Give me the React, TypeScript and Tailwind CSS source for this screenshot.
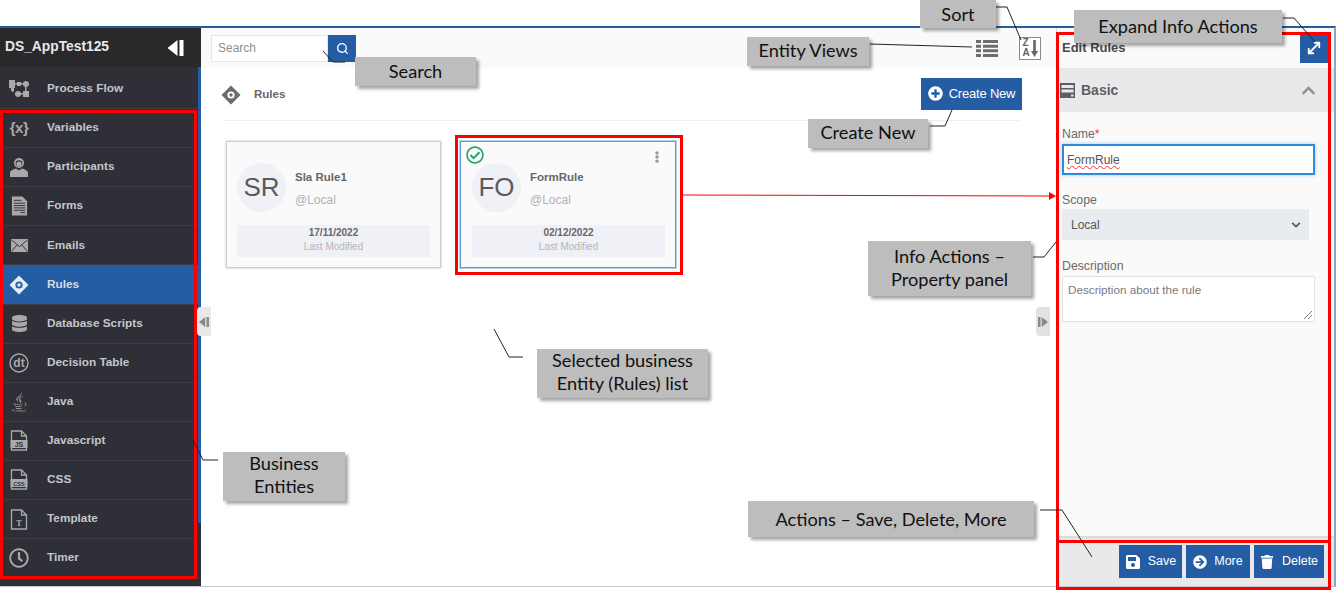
import React from "react";
import {
  FaDatabase, FaJava, FaRegClock, FaPlusCircle, FaTrash, FaSave, FaChevronUp,
  FaRegCheckCircle, FaEllipsisV, FaChevronDown, FaArrowCircleRight,
} from "react-icons/fa";
import { MoveDiagonal, Search as SearchIcon } from "lucide-react";

const C = "#a9a9ab";

const Diamond = ({ color = C, inner = "#2f2f37", size = 20 }: { color?: string; inner?: string; size?: number }) => (
  <svg width={size} height={size} viewBox="0 0 20 20">
    <path d="M10 0.5 19.5 10 10 19.5 0.5 10Z" fill={color} />
    <circle cx="10" cy="10" r="3.6" fill={inner} />
    <circle cx="10" cy="10" r="1.7" fill={color} />
  </svg>
);

const FlowIcon = () => (
  <svg width="20" height="20" viewBox="0 0 20 20" fill={C}>
    <rect x="0" y="1" width="6" height="8" />
    <rect x="8" y="3" width="4" height="4" />
    <circle cx="17" cy="5" r="3" />
    <rect x="5" y="4" width="12" height="1.5" />
    <rect x="3" y="8" width="1.5" height="5" />
    <rect x="16" y="7" width="1.5" height="8" />
    <rect x="2" y="9" width="3" height="3" />
    <circle cx="9" cy="15" r="3" />
    <rect x="14" y="12" width="6" height="6" />
    <rect x="10" y="14" width="5" height="1.5" />
  </svg>
);

const UserIcon = () => (
  <svg width="20" height="21" viewBox="0 0 20 21" fill={C}>
    <circle cx="10" cy="6" r="5" />
    <circle cx="10" cy="6.6" r="3.3" fill="#2f2f37" />
    <circle cx="10" cy="7.2" r="2.6" fill={C} />
    <path d="M1 20v-4c0-2.5 4-4 6-4.500l3 2 3-2c2 .5 6 2 6 4.500v4Z" />
  </svg>
);

const FormIcon = () => (
  <svg width="17" height="20" viewBox="0 0 18 20">
    <path d="M1 0h11l5 5v15H1Z" fill={C} />
    <path d="M3 4h8M3 7h12M3 9.500h12M3 12h12M3 14.500h12M10 17h5" stroke="#2f2f37" strokeWidth="1" />
  </svg>
);

const MailIcon = () => (
  <svg width="17" height="13" viewBox="0 0 17 13">
    <rect x="0" y="0" width="17" height="13" fill={C} />
    <path d="M0.500 1 8.500 7.500 16.500 1M0.500 12.500 6 6M16.500 12.500 11 6" fill="none" stroke="#2f2f37" strokeWidth="0.900" />
  </svg>
);

const FileLabel = ({ text, outline }: { text: string; outline?: boolean }) => (
  <svg width="18" height="21" viewBox="0 0 18 21">
    <path d="M1.500 20V1h10l5 5v14Z" fill="none" stroke={C} strokeWidth="1.300" />
    <path d="M11.500 1v5h5" fill="none" stroke={C} strokeWidth="1.300" />
    {outline ? (
      <text x="9" y="17" textAnchor="middle" fontSize="9" fontFamily="'Liberation Serif',serif" fontWeight="700" fill={C}>{text}</text>
    ) : (
      <>
        <rect x="0.500" y="10" width="17" height="8" fill={C} />
        <text x="9" y="16.500" textAnchor="middle" fontSize={text.length > 2 ? 5.500 : 7} fontFamily="'Liberation Sans',sans-serif" fontWeight="700" fill="#2f2f37">{text}</text>
      </>
    )}
  </svg>
);

const DtIcon = () => (
  <svg width="20" height="20" viewBox="0 0 20 20">
    <circle cx="10" cy="10" r="9" fill="none" stroke={C} strokeWidth="1.400" />
    <text x="10" y="14" textAnchor="middle" fontSize="12" fontWeight="700" fontFamily="'Liberation Sans',sans-serif" fill={C}>dt</text>
  </svg>
);

const Toggle = ({ color, w, h, flip }: { color: string; w: number; h: number; flip?: boolean }) => (
  <svg width={w} height={h} viewBox="0 0 16 16" className={flip ? "rotate-180" : ""}>
    <path d="M10 0V16L0 8Z M12 0H16V16H12Z" fill={color} />
  </svg>
);

const ListIcon = () => (
  <svg width="22" height="17" viewBox="0 0 22 17" fill="#6e6e6e">
    <path d="M0 0h5v3H0ZM7 0h15v3H7ZM0 4.670h5v3H0ZM7 4.670h15v3H7ZM0 9.330h5v3H0ZM7 9.330h15v3H7ZM0 14h5v3H0ZM7 14h15v3H7Z" />
  </svg>
);

const items: { label: string; icon: React.ReactNode; active?: boolean }[] = [
  { label: "Process Flow", icon: <FlowIcon /> },
  { label: "Variables", icon: <span className="text-[15px] font-bold text-[#a9a9ab] tracking-[-0.5px]">{"{x}"}</span> },
  { label: "Participants", icon: <UserIcon /> },
  { label: "Forms", icon: <FormIcon /> },
  { label: "Emails", icon: <MailIcon /> },
  { label: "Rules", icon: <Diamond color="#e4ecf5" inner="#245da3" />, active: true },
  { label: "Database Scripts", icon: <FaDatabase size={17} color={C} /> },
  { label: "Decision Table", icon: <DtIcon /> },
  { label: "Java", icon: <FaJava size={20} color={C} /> },
  { label: "Javascript", icon: <FileLabel text="JS" /> },
  { label: "CSS", icon: <FileLabel text="CSS" /> },
  { label: "Template", icon: <FileLabel text="T" outline /> },
  { label: "Timer", icon: <FaRegClock size={20} color={C} /> },
];

const Sidebar = () => (
  <aside className="w-[201px] flex flex-col bg-[#2f2f37] shrink-0">
    <div className="h-[39px] shrink-0 bg-[#29292c] flex items-center justify-between pl-[5px] pr-[17px]">
      <span className="text-[13.800px] font-bold text-[#e8e8e8]">DS_AppTest125</span>
      <Toggle color="#ffffff" w={17} h={16} />
    </div>
    <div className="flex-1 flex flex-col pt-[3px] border-r-[3px] border-[#245da3]">
      {items.map((it) => (
        <div
          key={it.label}
          className={`h-[39.100px] shrink-0 flex items-center border-b border-[#3d3d44] ${it.active ? "bg-[#245da3]" : ""}`}
        >
          <span className="w-[47px] pr-[9px] flex justify-center">{it.icon}</span>
          <span className={`text-[11.800px] font-bold ${it.active ? "text-[#d5dce6]" : "text-[#c3c6cc]"}`}>{it.label}</span>
        </div>
      ))}
    </div>
  </aside>
);

const Card = ({ initials, name, date, selected }: { initials: string; name: string; date: string; selected?: boolean }) => (
  <div className={`relative h-[127px] bg-[#fafafa] pr-[10px] pt-[21px] border ${selected ? "w-[216px] pl-[11px] border-[#5a9bd0] shadow-[0_0_0_1px_#b9d4ea]" : "w-[215px] pl-[10px] border-[#cfcfcf] shadow-[0_0_2px_#bbb]"}`}>
    {selected && (
      <>
        <FaRegCheckCircle size={18} color="#27a567" className="absolute left-[5px] top-[4px]" />
        <FaEllipsisV size={12} color="#9a9a9a" className="absolute right-[12px] top-[9px]" />
      </>
    )}
    <div className="flex">
      <div className="w-[49px] h-[49px] rounded-full bg-[#f0f1f6] flex items-center justify-center text-[26px] text-[#5b5b5e]">{initials}</div>
      <div className="ml-[9px] pt-[7px]">
        <div className="text-[11.500px] font-bold text-[#67676a] leading-[14px]">{name}</div>
        <div className="text-[12px] text-[#b1b1b1] leading-[14px] mt-[9px]">@Local</div>
      </div>
    </div>
    <div className="mt-[13px] h-[32px] pb-[2px] bg-[#f0f1f6] flex flex-col items-center justify-center">
      <span className="text-[10px] font-bold text-[#67676a] leading-[14px]">{date}</span>
      <span className="text-[10px] text-[#b4b4b4] leading-[14px]">Last Modified</span>
    </div>
  </div>
);

const Main = () => (
  <main className="flex-1 flex flex-col bg-white">
    <div className="h-[40px] shrink-0 bg-[#fafafa] flex items-center justify-between pl-[10px] pr-[15px]">
      <div className="flex">
        <div className="w-[117px] h-[27px] bg-white border border-[#e6e6e6] flex items-center pl-[6px] text-[12px] text-[#8b8f94]">Search</div>
        <div className="w-[28px] h-[27px] bg-[#245da3] flex items-center justify-center">
          <SearchIcon size={13} color="#fff" strokeWidth={2.5} />
        </div>
      </div>
      <div className="flex items-center gap-[21px]">
        <ListIcon />
        <div className="w-[22px] h-[23px] border border-[#8a8a8a] flex items-center justify-center gap-[1px] bg-white">
          <span className="flex flex-col text-[10px] font-bold leading-[10px] text-[#666]"><span>Z</span><span>A</span></span>
          <svg width="7" height="17" viewBox="0 0 7 17" fill="#666"><path d="M2.200 0h2.600v11H7L3.500 17 0 11h2.200Z" /></svg>
        </div>
      </div>
    </div>
    <div className="ml-[20px] mr-[34px] h-[53px] shrink-0 border-b border-[#eeeeee] flex items-center justify-between rounded-b">
      <div className="flex items-center mt-[2px]">
        <span className="w-[33px] flex"><Diamond color="#6c6c6c" inner="#ffffff" /></span>
        <span className="text-[11.500px] font-bold text-[#67676a]">Rules</span>
      </div>
      <div className="w-[101px] h-[32px] -mt-[1px] bg-[#245da3] flex items-center justify-center gap-[6px] text-white text-[13px] tracking-[-0.2px]">
        <FaPlusCircle size={15} />
        <span>Create New</span>
      </div>
    </div>
    <div className="flex gap-[19px] pl-[25px] pt-[20px]">
      <Card initials="SR" name="Sla Rule1" date="17/11/2022" />
      <Card initials="FO" name="FormRule" date="02/12/2022" selected />
    </div>
  </main>
);

const Panel = () => (
  <section className="w-[278px] shrink-0 flex flex-col bg-[#fafafa] border-l border-[#d8d8d8]">
    <div className="h-[40px] shrink-0 flex items-center justify-between pl-[5px] pr-[6px]">
      <span className="text-[13px] font-bold text-[#4a4a4a]">Edit Rules</span>
      <div className="w-[28px] h-[30px] bg-[#245da3] flex items-center justify-center">
        <MoveDiagonal size={18} color="#fff" strokeWidth={2.4} />
      </div>
    </div>
    <div className="h-[44px] shrink-0 bg-[#e9e9ec] flex items-center justify-between pl-[3px] pr-[18px]">
      <span className="flex items-center gap-[6px] text-[14px] font-bold text-[#5f5f63]">
        <svg width="15" height="15" viewBox="0 0 15 15" fill="#5f5f63"><path d="M0 0h15v15H0Z" /><path d="M1.500 2h12v3h-12ZM1.500 6.500h12v3h-12ZM11 11.500h2.500v2H11Z" fill="#e9e9ec" /></svg>
        Basic
      </span>
      <FaChevronUp size={15} color="#8f8f8f" />
    </div>
    <div className="flex-1 px-[5px] pt-[14px] text-[12.300px] text-[#6a6a6a]">
      <div className="leading-[16px]">Name<span className="text-[#e33]">*</span></div>
      <div className="mt-[2px] w-[253px] h-[31px] bg-white border-2 border-[#2f8ae0] shadow-[0_0_4px_#9cc9f0] flex items-center pl-[3px] text-[12px] text-[#555]">
        <span className="underline decoration-wavy decoration-[#e33] decoration-1">FormRule</span>
      </div>
      <div className="mt-[17px] leading-[16px]">Scope</div>
      <div className="mt-[1px] w-[247px] h-[31px] bg-[#e9ecef] flex items-center justify-between pl-[9px] pr-[8px] text-[12px] text-[#555]">
        <span>Local</span>
        <FaChevronDown size={10} color="#555" />
      </div>
      <div className="mt-[18px] leading-[16px]">Description</div>
      <div className="relative mt-[2px] w-[253px] h-[46px] bg-white border border-[#e2e2e2] pl-[5px] pt-[6px] text-[11.700px] leading-[14px] text-[#7a7a80]">
        Description about the rule
        <svg width="10" height="10" viewBox="0 0 10 10" className="absolute right-[1px] bottom-[1px]"><path d="M1 9 9 1M5 9 9 5" stroke="#777" strokeWidth="1" /></svg>
      </div>
    </div>
    <div className="h-[50px] shrink-0 bg-[#e9e9ec] border-t-2 border-[#dcdcdc] flex items-start justify-end gap-[4px] pr-[10px] pt-[7px] text-white text-[12.500px]">
      <div className="w-[63px] h-[33px] bg-[#245da3] flex items-center justify-center gap-[7px]"><FaSave size={16} /><span>Save</span></div>
      <div className="w-[64px] h-[33px] bg-[#245da3] flex items-center justify-center gap-[7px]"><FaArrowCircleRight size={14} /><span>More</span></div>
      <div className="w-[70px] h-[33px] bg-[#245da3] flex items-center justify-center gap-[8px]"><FaTrash size={14} /><span>Delete</span></div>
    </div>
  </section>
);

const Note = ({ box, children }: { box: string; children: React.ReactNode }) => (
  <div className={`absolute bg-[#bdbdbd] shadow-[3px_3px_3px_rgba(0,0,0,0.35)] flex items-center justify-center text-center text-[18.200px] leading-[23px] text-[#111] font-['Lato',sans-serif] ${box}`}>
    <span>{children}</span>
  </div>
);

export default function App() {
  return (
    <div className="relative w-[1337px] h-[594px] overflow-hidden bg-white font-['Liberation_Sans',Arial,sans-serif]">
      <div className="pt-[26px] pb-[7px] h-full">
        <div className="h-full flex border-t-2 border-b border-t-[#2a5c9a] border-b-[#c8c8c8] border-r-2 border-r-[#8aa6c8] w-[1336px]">
          <Sidebar />
          <Main />
          <Panel />
        </div>
      </div>

      {/* sidebar edge below the blue stripe */}
      <div className="absolute left-[198px] top-[523px] w-[3px] h-[63px] bg-[#2f2f37]" />

      {/* collapse handles */}
      <div className="absolute left-[197px] top-[307px] w-[14px] h-[29px] bg-[#e8e8e8] rounded-l flex items-center justify-center">
        <Toggle color="#8a8a8a" w={10} h={10} />
      </div>
      <div className="absolute left-[1036px] top-[307px] w-[14px] h-[29px] bg-[#e2e2e2] rounded-l flex items-center justify-center">
        <Toggle color="#8a8a8a" w={10} h={10} flip />
      </div>

      {/* red highlight frames */}
      <div className="absolute left-0 top-[110px] w-[197px] h-[469px] border-[3px] border-[#f00]" />
      <div className="absolute left-[455px] top-[135px] w-[228px] h-[140px] border-[3px] border-[#f00]" />
      <div className="absolute left-[1056px] top-[32px] w-[275px] h-[511px] border-[3px] border-[#f00]" />
      <div className="absolute left-[1056px] top-[540px] w-[275px] h-[50px] border-[3px] border-[#f00]" />

      {/* connectors */}
      <svg className="absolute left-0 top-0 pointer-events-none" width="1337" height="594" fill="none">
        <g stroke="#222" strokeWidth="1">
          <path d="M996 7H1007L1021 40" />
          <path d="M1283 18H1294L1315 42" />
          <path d="M870 44L972 47" />
          <path d="M930 126H945L952 110" />
          <path d="M323 51L333 62H345" />
          <path d="M1033 257H1044L1056 242" />
          <path d="M494 329L509 357H523" />
          <path d="M193 440L203 460H218" />
          <path d="M1040 510H1062L1092 557" />
        </g>
        <path d="M683 195L1050 196" stroke="#f00" strokeWidth="1" />
        <path d="M1049 192L1056 196L1049 200Z" fill="#f00" />
      </svg>

      <Note box="left-[920px] top-0 w-[76px] h-[28px]">Sort</Note>
      <Note box="left-[1074px] top-[10px] w-[208px] h-[33px]">Expand Info Actions</Note>
      <Note box="left-[747px] top-[37px] w-[122px] h-[29px] pb-[2px]">Entity Views</Note>
      <Note box="left-[355px] top-[57px] w-[121px] h-[29px]">Search</Note>
      <Note box="left-[808px] top-[119px] w-[120px] h-[29px] pb-[2px]">Create New</Note>
      <Note box="left-[868px] top-[241px] w-[163px] h-[55px] pb-[2px]">Info Actions –<br />Property panel</Note>
      <Note box="left-[537px] top-[349px] w-[171px] h-[49px] pb-[4px]">Selected business<br />Entity (Rules) list</Note>
      <Note box="left-[223px] top-[452px] w-[122px] h-[49px] pb-[4px]">Business<br />Entities</Note>
      <Note box="left-[748px] top-[501px] w-[286px] h-[36px]">Actions – Save, Delete, More</Note>
    </div>
  );
}
